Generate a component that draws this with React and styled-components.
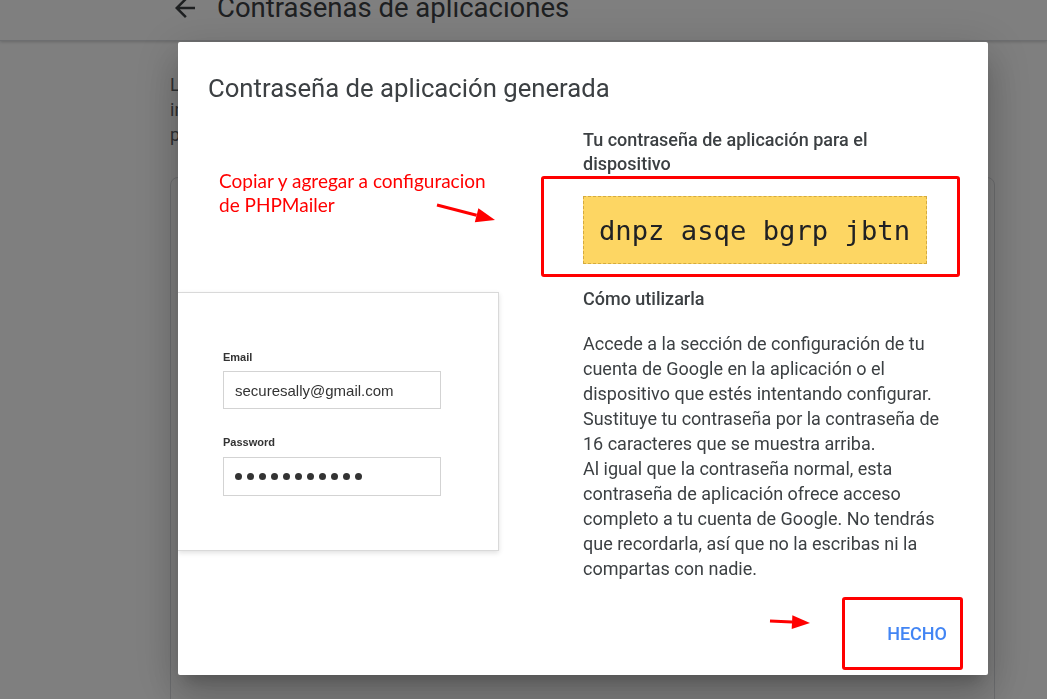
import React from 'react';
import styled, { createGlobalStyle } from 'styled-components';

const GlobalStyle = createGlobalStyle`
  html, body {
    margin: 0;
    padding: 0;
    background: #fff;
    overflow: hidden;
  }
  body {
    font-family: Roboto, "Liberation Sans", sans-serif;
  }
`;

const Page = styled.div`
  width: 1047px;
  height: 699px;
  background: #fff;
  overflow: hidden;
`;

const TopBar = styled.header`
  height: 40px;
  padding-left: 170px;
  display: flex;
  align-items: flex-start;
  border-bottom: 1px solid #dadce0;
  box-shadow: 0 1px 3px rgba(60, 64, 67, 0.25);
  overflow: hidden;
`;

const TopRow = styled.div`
  display: flex;
  align-items: center;
  gap: 17px;
  height: 32px;
  margin-top: -8px;
  color: #3c4043;
`;

const PageTitle = styled.h1`
  margin: 0;
  font-family: Roboto, sans-serif;
  font-weight: 400;
  font-size: 27.5px;
  line-height: 32px;
  color: #3c4043;
`;

const Main = styled.main`
  padding: 31px 0 0 170px;
  width: 825px;
`;

const Intro = styled.p`
  margin: 0;
  font-size: 18px;
  line-height: 25px;
  color: #5f6368;
  white-space: nowrap;
`;

const Card = styled.section`
  margin-top: 30px;
  height: 600px;
  border: 1px solid #dadce0;
  border-radius: 8px;
`;

const Scrim = styled.div`
  position: fixed;
  inset: 0;
  background: rgba(0, 0, 0, 0.5);
`;

const Dialog = styled.div`
  position: fixed;
  left: 178px;
  top: 42px;
  width: 810px;
  height: 633px;
  background: #fff;
  border-radius: 2px;
  display: flex;
  flex-direction: column;
  overflow: hidden;
  box-shadow: 0 11px 15px -7px rgba(0, 0, 0, 0.2),
    0 24px 38px 3px rgba(0, 0, 0, 0.14), 0 9px 46px 8px rgba(0, 0, 0, 0.12);
`;

const DialogTitle = styled.h2`
  margin: 0;
  padding: 30px 0 0 30px;
  font-family: Roboto, sans-serif;
  font-weight: 400;
  font-size: 25.7px;
  line-height: 32px;
  color: #3c4043;
`;

const Body = styled.div`
  margin-top: 24px;
  display: grid;
  grid-template-columns: 405px 380px;
`;

const LeftCol = styled.div`
  position: relative;
`;

const Note = styled.p`
  margin: 41px 0 0 41px;
  font-family: Lato, "Open Sans", sans-serif;
  font-size: 19px;
  line-height: 24px;
  color: #ff0000;
`;

const Arrow = styled.svg`
  position: absolute;
  left: ${(p) => p.$x}px;
  top: ${(p) => p.$y}px;
  overflow: visible;
`;

const LoginShot = styled.div`
  margin-top: 75px;
  width: 321px;
  height: 259px;
  box-sizing: border-box;
  border: 1px solid #d9d9d9;
  border-left: none;
  box-shadow: 0 2px 5px rgba(0, 0, 0, 0.12);
  padding: 57px 0 0 45px;
  font-family: "Liberation Sans", Arial, sans-serif;
`;

const FieldLabel = styled.div`
  font-size: 11px;
  line-height: 14px;
  font-weight: 700;
  color: #333;
  margin-top: ${(p) => p.$top || 0}px;
`;

const FakeInput = styled.div`
  margin-top: ${(p) => p.$gap}px;
  width: 218px;
  height: ${(p) => p.$h}px;
  box-sizing: border-box;
  border: 1px solid #d3d3d3;
  padding-left: 11px;
  display: flex;
  align-items: center;
  gap: 5px;
  font-size: 15px;
  color: #333;
`;

const Dot = styled.span`
  width: 7px;
  height: 7px;
  border-radius: 50%;
  background: #333;
`;

const RightCol = styled.div`
  display: flex;
  flex-direction: column;
`;

const Heading = styled.h3`
  margin: 0;
  font-family: Roboto, sans-serif;
  font-weight: 500;
  font-size: 18px;
  line-height: 24px;
  color: #3c4043;
  margin-top: ${(p) => p.$top || 0}px;
`;

const RedFrame = styled.div`
  margin-left: -42px;
  width: 419px;
  height: 101px;
  box-sizing: border-box;
  border: 3px solid #ff0000;
  border-radius: 3px;
  padding: 17px 30px 0 39px;
`;

const Code = styled.div`
  height: 68px;
  box-sizing: border-box;
  background: #fdd663;
  border: 1px dashed #d5ab3f;
  display: flex;
  align-items: center;
  padding-left: 15px;
  font-family: "DejaVu Sans Mono", "Liberation Mono", monospace;
  font-size: 27.2px;
  color: #202124;
  white-space: pre;
`;

const Paragraph = styled.p`
  margin: 20px 0 0;
  font-size: 18px;
  line-height: 25px;
  color: #3c4043;
  white-space: nowrap;
`;

const Footer = styled.div`
  position: relative;
  margin-top: auto;
  padding: 0 25px 5px 0;
  display: flex;
  justify-content: flex-end;
`;

const ButtonFrame = styled.div`
  width: 121px;
  height: 73px;
  box-sizing: border-box;
  border: 3px solid #ff0000;
  border-radius: 3px;
  display: flex;
  align-items: center;
  justify-content: flex-end;
  padding-right: 13px;
`;

const TextButton = styled.button`
  background: none;
  border: none;
  padding: 0;
  font-family: Roboto, sans-serif;
  font-weight: 500;
  font-size: 18px;
  color: #4285f4;
  cursor: pointer;
`;

const RedArrow = ({ x, y, w, h, x1, y1, x2, y2, head }) => {
  const ang = Math.atan2(y2 - y1, x2 - x1);
  const bx = x2 - Math.cos(ang) * head;
  const by = y2 - Math.sin(ang) * head;
  const nx = -Math.sin(ang) * (head * 0.38);
  const ny = Math.cos(ang) * (head * 0.38);
  return (
    <Arrow $x={x} $y={y} width={w} height={h} viewBox={`0 0 ${w} ${h}`}>
      <line x1={x1} y1={y1} x2={bx} y2={by} stroke="#ff0000" strokeWidth="3" />
      <polygon
        points={`${x2},${y2} ${bx + nx},${by + ny} ${bx - nx},${by - ny}`}
        fill="#ff0000"
      />
    </Arrow>
  );
};

const usage = [
  'Accede a la sección de configuración de tu',
  'cuenta de Google en la aplicación o el',
  'dispositivo que estés intentando configurar.',
  'Sustituye tu contraseña por la contraseña de',
  '16 caracteres que se muestra arriba.',
  'Al igual que la contraseña normal, esta',
  'contraseña de aplicación ofrece acceso',
  'completo a tu cuenta de Google. No tendrás',
  'que recordarla, así que no la escribas ni la',
  'compartas con nadie.',
];

export default function App() {
  return (
    <>
      <GlobalStyle />
      <Page>
        <TopBar>
          <TopRow>
            <svg width="30" height="30" viewBox="0 0 24 24" fill="#3c4043">
              <path d="M20 11H7.83l5.59-5.59L12 4l-8 8 8 8 1.41-1.41L7.83 13H20v-2z" />
            </svg>
            <PageTitle>Contrasenas de aplicaciones</PageTitle>
          </TopRow>
        </TopBar>
        <Main>
          <Intro>
            Las contraseñas
            <br />
            iniciar sesión
            <br />
            para aplicaciones
          </Intro>
          <Card />
        </Main>
      </Page>
      <Scrim />
      <Dialog role="dialog">
        <DialogTitle>Contraseña de aplicación generada</DialogTitle>
        <Body>
          <LeftCol>
            <Note>
              Copiar y agregar a configuracion
              <br />
              de PHPMailer
            </Note>
            <RedArrow x={258} y={74} w={62} h={22} x1={1} y1={3} x2={59} y2={18} head={19} />
            <LoginShot>
              <FieldLabel>Email</FieldLabel>
              <FakeInput $gap={7} $h={38}>securesally@gmail.com</FakeInput>
              <FieldLabel $top={26}>Password</FieldLabel>
              <FakeInput $gap={8} $h={39}>
                {Array.from({ length: 11 }).map((_, i) => (
                  <Dot key={i} />
                ))}
              </FakeInput>
            </LoginShot>
          </LeftCol>
          <RightCol>
            <Heading>
              Tu contraseña de aplicación para el
              <br />
              dispositivo
            </Heading>
            <RedFrame>
              <Code>dnpz asqe bgrp jbtn</Code>
            </RedFrame>
            <Heading $top={10}>Cómo utilizarla</Heading>
            <Paragraph>
              {usage.map((line, i) => (
                <React.Fragment key={i}>
                  {line}
                  {i < usage.length - 1 && <br />}
                </React.Fragment>
              ))}
            </Paragraph>
          </RightCol>
        </Body>
        <Footer>
          <RedArrow x={590} y={18} w={44} h={16} x1={2} y1={6} x2={42} y2={8} head={18} />
          <ButtonFrame>
            <TextButton>HECHO</TextButton>
          </ButtonFrame>
        </Footer>
      </Dialog>
    </>
  );
}
